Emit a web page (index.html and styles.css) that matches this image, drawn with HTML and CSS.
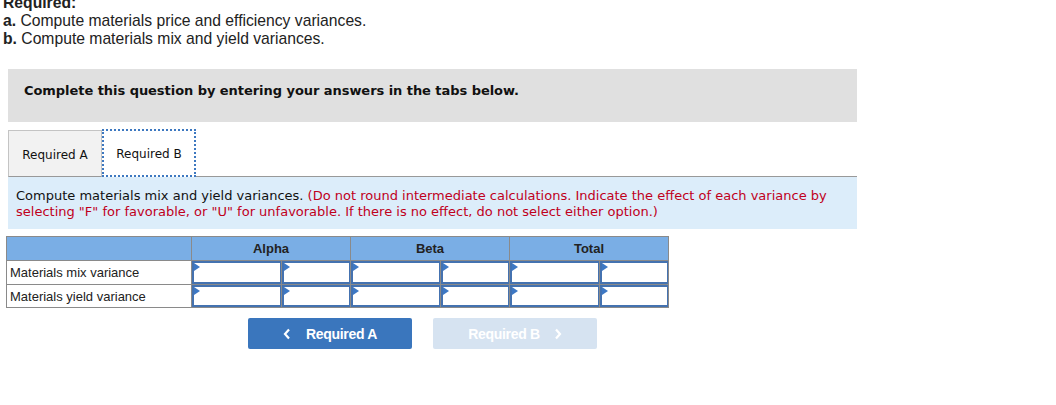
FILE: index.html
```html
<!DOCTYPE html>
<html>
<head>
<meta charset="utf-8">
<link rel="stylesheet" href="styles.css">
</head>
<body>
<div class="req">
  <div class="req-title">Required:</div>
  <div><b>a.</b> Compute materials price and efficiency variances.</div>
  <div><b>b.</b> Compute materials mix and yield variances.</div>
</div>
<div class="notice">Complete this question by entering your answers in the tabs below.</div>
<div class="tabs">
  <div class="tab">Required A</div>
  <div class="tab active">Required B</div>
  <div class="tab-rest"></div>
</div>
<div class="instr">Compute materials mix and yield variances. <span class="red">(Do not round intermediate calculations. Indicate the effect of each variance by selecting "F" for favorable, or "U" for unfavorable. If there is no effect, do not select either option.)</span></div>
<table class="grid">
  <colgroup>
    <col class="c-label"><col class="c-amt"><col class="c-fu"><col class="c-amt"><col class="c-fu"><col class="c-amt"><col class="c-fu">
  </colgroup>
  <tr class="head"><th></th><th colspan="2">Alpha</th><th colspan="2">Beta</th><th colspan="2">Total</th></tr>
  <tr>
    <td class="label">Materials mix variance</td>
    <td class="in"><div class="box"></div></td><td class="in"><div class="box"></div></td>
    <td class="in"><div class="box"></div></td><td class="in"><div class="box"></div></td>
    <td class="in"><div class="box"></div></td><td class="in"><div class="box"></div></td>
  </tr>
  <tr class="last">
    <td class="label">Materials yield variance</td>
    <td class="in"><div class="box"></div></td><td class="in"><div class="box"></div></td>
    <td class="in"><div class="box"></div></td><td class="in"><div class="box"></div></td>
    <td class="in"><div class="box"></div></td><td class="in"><div class="box"></div></td>
  </tr>
</table>
<div class="nav">
  <div class="btn prev"><svg class="chev left" viewBox="0 0 8 12" width="8" height="12"><path d="M6 1.5 L2 6 L6 10.5" fill="none" stroke="#fff" stroke-width="2.2"/></svg>Required A</div>
  <div class="btn next">Required B<svg class="chev right" viewBox="0 0 8 12" width="8" height="12"><path d="M2 1.5 L6 6 L2 10.5" fill="none" stroke="#fff" stroke-width="2.2"/></svg></div>
</div>
</body>
</html>
```

FILE: styles.css
```css
html, body { margin: 0; padding: 0; background: #fff; }
body { width: 1056px; height: 405px; overflow: hidden; }

.req {
  font-family: "Liberation Sans", Arial, sans-serif;
  font-size: 15.7px;
  line-height: 18px;
  color: #222;
  padding-left: 3px;
  padding-top: 2px;
  margin-top: -8px;
}
.req b { font-weight: bold; }
.req-title { font-weight: bold; }

.notice {
  margin: 21px 0 0 8px;
  width: 849px;
  height: 53px;
  box-sizing: border-box;
  background: #e0e0e0;
  padding: 14px 0 0 16px;
  font-family: "DejaVu Sans", Verdana, sans-serif;
  font-weight: bold;
  font-size: 13px;
  letter-spacing: -0.05px;
  color: #111;
}

.tabs {
  display: flex;
  align-items: flex-end;
  margin: 7px 0 0 8px;
  width: 849px;
  height: 48px;
  font-family: "DejaVu Sans", Verdana, sans-serif;
  font-size: 12px;
  color: #111;
}
.tab {
  box-sizing: border-box;
  height: 47px;
  width: 94px;
  display: flex;
  align-items: center;
  justify-content: center;
  background: #f2f2f2;
  border: 1px solid #c4c4c4;
  border-bottom: 1px solid #999;
  padding-top: 3px;
}
.tab.active {
  height: 48px;
  background: #fff;
  border: 2px dotted #3d78c0;
  padding-top: 2px;
}
.tab-rest { flex: 1; border-bottom: 1px solid #999; }

.instr {
  margin-left: 8px;
  width: 849px;
  height: 52px;
  box-sizing: border-box;
  background: #dcedfa;
  padding: 11px 0 0 8px;
  font-family: "DejaVu Sans", Verdana, sans-serif;
  font-size: 13px;
  line-height: 16px;
  color: #111;
}
.red { color: #c0001c; }

.grid {
  margin: 7px 0 0 6px;
  border-collapse: collapse;
  table-layout: fixed;
  width: 663px;
  font-family: "Liberation Sans", Arial, sans-serif;
  font-size: 13px;
  color: #222;
}
.c-label { width: 185px; }
.c-amt { width: 90px; }
.c-fu { width: 69px; }
.grid th, .grid td { border: 1px solid #8a8a8a; padding: 0; }
.grid .head th {
  background: #7aaee5;
  height: 23px;
  font-weight: bold;
  font-size: 13px;
  color: #222;
}
.grid td { height: 23px; }
.grid tr.last td { height: 22px; }
.grid td.label { padding-left: 3px; }
.box {
  position: relative;
  box-sizing: border-box;
  height: 23px;
  border: 2px solid #4472b0;
  border-right-width: 1px;
  background: #fff;
}
.grid tr.last .box { height: 22px; }
.box::before {
  content: "";
  position: absolute;
  left: 0; top: 0;
  border-left: 6px solid #3d78c4;
  border-top: 4px solid transparent;
  border-bottom: 4px solid transparent;
}

.nav {
  display: flex;
  gap: 21px;
  margin: 10px 0 0 248px;
}
.btn {
  box-sizing: border-box;
  width: 164px;
  height: 31px;
  border-radius: 2px;
  display: flex;
  align-items: center;
  justify-content: center;
  font-family: "Liberation Sans", Arial, sans-serif;
  font-weight: bold;
  font-size: 14px;
  letter-spacing: -0.3px;
  color: #fff;
}
.btn.prev { background: #3a76bd; }
.btn.next { background: #d6e3f1; }
.chev { display: block; }
.chev.left { margin-right: 15px; }
.chev.right { margin-left: 14px; }
```
